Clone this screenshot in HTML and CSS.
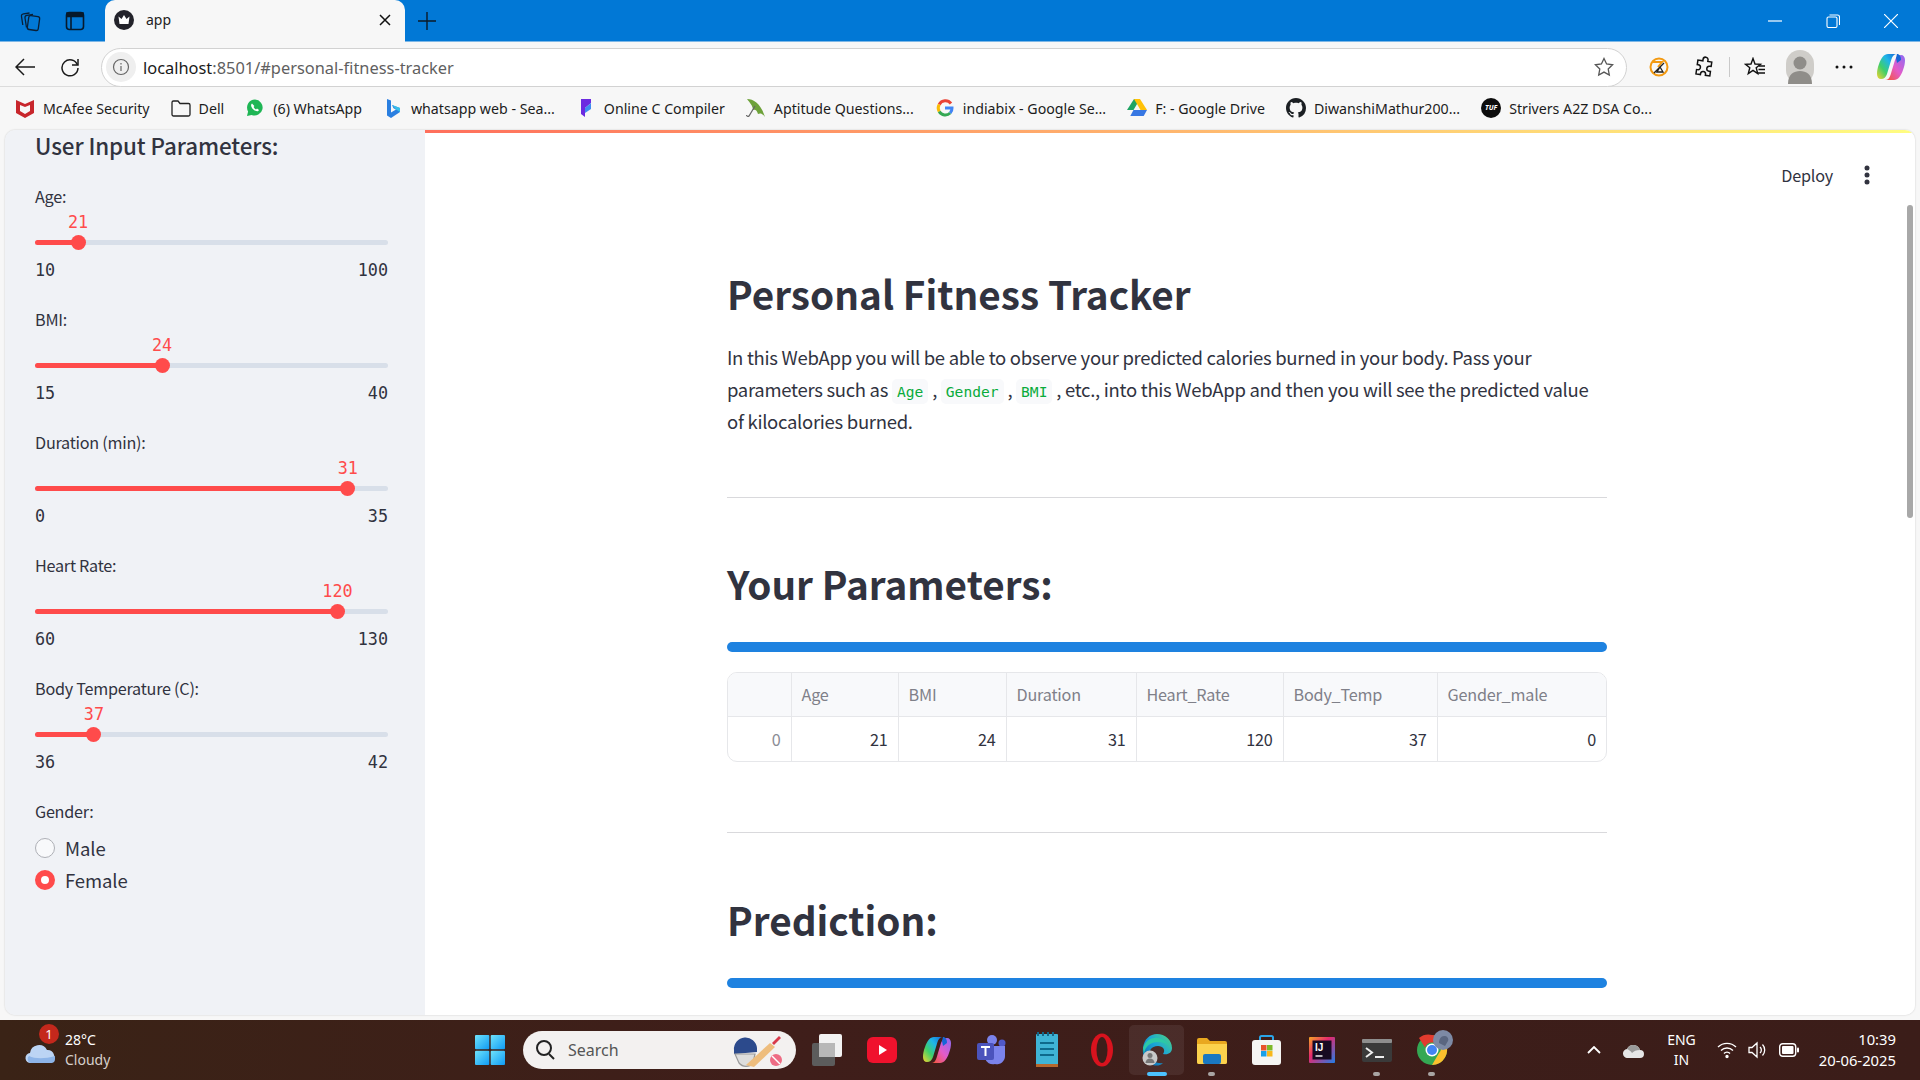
FILE: index.html
```html
<!DOCTYPE html>
<html lang="en">
<head>
	<meta charset="UTF-8">
	<title>app</title>
	<link rel="stylesheet" href="styles.css">
</head>
<body>

<svg class="defs" width="0" height="0">
	<defs>
		<linearGradient id="cop-a" x1="1" y1="0" x2="0" y2="1"><stop offset="0" stop-color="#1566d6"/><stop offset=".35" stop-color="#1fb6e8"/><stop offset=".65" stop-color="#3fcf6a"/><stop offset="1" stop-color="#f6d32d"/></linearGradient>
		<linearGradient id="cop-b" x1="1" y1="0" x2="0" y2="1"><stop offset="0" stop-color="#8a6cf5"/><stop offset=".5" stop-color="#e45bc8"/><stop offset="1" stop-color="#f5562a"/></linearGradient>
		<linearGradient id="win-g" x1="0" y1="0" x2="1" y2="1"><stop offset="0" stop-color="#6fe3fb"/><stop offset="1" stop-color="#0f9bf5"/></linearGradient>
		<linearGradient id="edge-g" x1="1" y1="0" x2="0" y2="1"><stop offset="0" stop-color="#4fd67a"/><stop offset=".45" stop-color="#1aa6d8"/><stop offset="1" stop-color="#0c5ea8"/></linearGradient>
		<linearGradient id="ij-g" x1="0" y1="0" x2="1" y2="1"><stop offset="0" stop-color="#f5a623"/><stop offset=".4" stop-color="#e6286e"/><stop offset="1" stop-color="#1f7fe8"/></linearGradient>
		<symbol id="copilot" viewBox="0 0 28 28">
			<path d="M11 1h9c-3 0-4.500 2-5.500 5L10 21c-1 3-3 5-6 5-2.500 0-4-2-4-5 0-3 .5-6 2-10C4 5 7 1 11 1z" fill="url(#cop-a)"/>
			<path d="M17 27H8c3 0 4.500-2 5.500-5L18 7c1-3 3-5 6-5 2.500 0 4 2 4 5 0 3-.5 6-2 10-2 6-5 10-9 10z" fill="url(#cop-b)"/>
			<path d="M20 1c2.500 0 4 2.500 4 6l-4 3-1-5z" fill="#1566d6"/>
		</symbol>
	</defs>
</svg>

<div class="browser">

	<div class="tabstrip">
		<div class="strip-btn">
			<svg width="22" height="22" viewBox="0 0 22 22" fill="none" stroke="#0a1f35" stroke-width="1.3"><rect x="9" y="6" width="11" height="14" rx="2" transform="rotate(8 14 13)"/><path d="M7.500 17.500 6 8c-.2-1.500.5-2.500 2-2.700L14 4.500"/><path d="M3.800 15 2.500 6.500c-.2-1.500.5-2.500 2-2.700L10.500 3"/></svg>
		</div>
		<div class="strip-btn strip-btn-b">
			<svg width="20" height="20" viewBox="0 0 20 20" fill="none" stroke="#071a2c" stroke-width="1.6"><rect x="1.500" y="1.500" width="17" height="17" rx="3"/><path d="M2 2h16v3.500H2z" fill="#071a2c"/><path d="M6 5v13"/></svg>
		</div>
		<div class="tab">
			<svg width="20" height="20" viewBox="0 0 20 20"><circle cx="10" cy="10" r="10" fill="#23232b"/><path d="M4.500 6.500 7.500 9 10 5l2.500 4 3-2.500-1 7.500h-9z" fill="#fff"/></svg>
			<span class="tab-title">app</span>
			<svg class="tab-close" width="12" height="12" viewBox="0 0 12 12" stroke="#111" stroke-width="1.5"><path d="M1 1l10 10M11 1 1 11"/></svg>
		</div>
		<svg class="tab-new" width="18" height="18" viewBox="0 0 18 18" stroke="#0b1a28" stroke-width="1.4"><path d="M9 0v18M0 9h18"/></svg>
		<div class="win-btns">
			<svg width="14" height="14" viewBox="0 0 14 14" stroke="#fff" stroke-width="1.2"><path d="M0 7h14"/></svg>
			<svg width="14" height="14" viewBox="0 0 14 14" fill="none" stroke="#fff" stroke-width="1.1"><rect x="1" y="3" width="10" height="10.500" rx="1.500"/><path d="M3.500 1h8a2 2 0 0 1 2 2v8"/></svg>
			<svg width="14" height="14" viewBox="0 0 14 14" stroke="#fff" stroke-width="1.2"><path d="M0 0l14 14M14 0 0 14"/></svg>
		</div>
	</div>

	<div class="toolbar">
		<svg class="tool-back" width="20" height="18" viewBox="0 0 20 18" fill="none" stroke="#1a1a1a" stroke-width="1.5"><path d="M20 9H1M9 1 1 9l8 8"/></svg>
		<svg class="tool-reload" width="20" height="20" viewBox="0 0 20 20" fill="none" stroke="#1a1a1a" stroke-width="1.5"><path d="M17.500 8A8 8 0 1 0 18 11"/><path d="M18 2v6h-6"/></svg>
		<div class="address">
			<span class="addr-info">
				<svg width="18" height="18" viewBox="0 0 18 18" fill="none" stroke="#666" stroke-width="1.2"><circle cx="9" cy="9" r="7.500"/><path d="M9 8v5M9 5v1.500"/></svg>
			</span>
			<span class="addr-text">localhost<span class="addr-dim">:8501/#personal-fitness-tracker</span></span>
			<svg class="addr-star" width="20" height="20" viewBox="0 0 20 20" fill="none" stroke="#555" stroke-width="1.3"><path d="m10 1.500 2.600 5.500 6 .8-4.400 4.200 1.100 6L10 15.100 4.700 18l1.100-6L1.400 7.800l6-.8z"/></svg>
		</div>
		<div class="tool-icons">
			<svg class="ti" width="20" height="20" viewBox="0 0 20 20" fill="none"><circle cx="10" cy="10" r="8.500" stroke="#f39a12" stroke-width="2"/><path d="M4 5h9l-4 5" stroke="#f39a12" stroke-width="2"/><path d="M5 16 15 6M8 15h6l-3-5z" stroke="#222" stroke-width="1.300"/></svg>
			<svg class="ti" width="20" height="22" viewBox="0 0 20 22" fill="none" stroke="#111" stroke-width="1.500"><path d="M8 3.500a2.500 2.500 0 0 1 5 0V5h4v4.500h-1.500a2.500 2.500 0 0 0 0 5H17V19h-4.500v-1a2.500 2.500 0 0 0-5 0v1H3v-4.500h1a2.500 2.500 0 0 0 0-5H3V5h5z" transform="rotate(8 10 11)"/></svg>
			<span class="tool-sep"></span>
			<svg class="ti" width="22" height="20" viewBox="0 0 22 20" fill="none" stroke="#111" stroke-width="1.400"><path d="M9 1.500 11 7l5.500.3-4.300 3.500 1.500 5.700L9 13.300l-4.700 3.200 1.500-5.700L1.500 7.300 7 7z"/><path d="M15 9h6M14.500 12.500H21M14 16h7"/></svg>
			<svg class="ti" width="28" height="34" viewBox="0 0 28 34"><rect width="28" height="34" rx="14" fill="#cfcdc9"/><circle cx="14" cy="13" r="6.500" fill="#8f8d89"/><path d="M2 34c0-10 6-13 12-13s12 3 12 13z" fill="#8f8d89"/></svg>
			<svg class="ti" width="18" height="4" viewBox="0 0 18 4" fill="#111"><circle cx="2" cy="2" r="1.500"/><circle cx="9" cy="2" r="1.500"/><circle cx="16" cy="2" r="1.500"/></svg>
			<svg class="ti" width="28" height="28"><use href="#copilot"/></svg>
		</div>
	</div>

	<div class="bookmarks">
		<a class="bm"><svg height="20" viewBox="0 0 18 20"><path d="M0 2 9 6l9-4v13l-9 5-9-5zM4 7v6l5 3 5-3V7l-5 2z" fill="#c8262c" fill-rule="evenodd"/></svg><span>McAfee Security</span></a>
		<a class="bm"><svg height="18" viewBox="0 0 20 18" fill="none" stroke="#222" stroke-width="1.300"><path d="M1 3.500A1.500 1.500 0 0 1 2.500 2H7l2 2.500h8.500A1.500 1.500 0 0 1 19 6v9.500a1.500 1.500 0 0 1-1.500 1.500h-15A1.500 1.500 0 0 1 1 15.500z"/></svg><span>Dell</span></a>
		<a class="bm"><svg height="20" viewBox="0 0 18 20"><path d="M9 1.500a8 8 0 0 0-6.900 12L1 18l4.600-1.100A8 8 0 1 0 9 1.500z" fill="#1fb655"/><path d="M6 5.500c-1 .8-1.200 2-.5 3.500 1 2 2.500 3.400 4.500 4.100 1.300.4 2.500 0 3-1.100l-2-1.400-1 .8c-1-.5-1.900-1.400-2.400-2.400l.8-1z" fill="#fff"/></svg><span>(6) WhatsApp</span></a>
		<a class="bm"><svg height="20" viewBox="0 0 16 20"><path d="M2 1l4 1.500v12l5-3-2.500-1.200L7 7l8 3v4l-9 6-4-2.500z" fill="#2a7fe0"/><path d="M7 7l8 3v4l-4-2.500z" fill="#37c0e8"/></svg><span>whatsapp web - Sea...</span></a>
		<a class="bm"><svg height="20" viewBox="0 0 12 20"><path d="M1 1h10v4L5 10V19L1 16z" fill="#6c2be0"/><path d="M5 10l6-5v6l-6 4z" fill="#3f8cf0"/></svg><span>Online C Compiler</span></a>
		<a class="bm"><svg height="22" viewBox="0 0 20 22"><path d="M1 2c7 0 14 5 18 18-3-4-5-4-7-3-1-4-3-5-5-4 0-4-3-7-6-11z" fill="#6ea23a"/><path d="M9 9 3 19a1.500 1.500 0 0 1-2.500-1" fill="none" stroke="#666" stroke-width="1.200"/></svg><span>Aptitude Questions...</span></a>
		<a class="bm"><svg height="18" viewBox="0 0 18 18" fill="none" stroke-width="3"><path d="M15 4.500A7 7 0 0 0 3.200 5.500" stroke="#ea4335"/><path d="M3.200 5.500a7 7 0 0 0 0 7" stroke="#fbbc05"/><path d="M3.200 12.500a7 7 0 0 0 11 1.500" stroke="#34a853"/><path d="M14.200 14A7 7 0 0 0 16 9H9" stroke="#4285f4"/></svg><span>indiabix - Google Se...</span></a>
		<a class="bm"><svg height="18" viewBox="0 0 20 18"><path d="M7 0h6l-6.500 11H0z" fill="#1fa463"/><path d="M7 0h6l7 11h-6.500z" fill="#ffc107"/><path d="M3.300 17 6.500 11H20l-3.300 6z" fill="#3777e3"/></svg><span>F: - Google Drive</span></a>
		<a class="bm"><svg height="20" viewBox="0 0 16 16"><path fill="#1b1f23" d="M8 0C3.580 0 0 3.580 0 8c0 3.540 2.290 6.530 5.470 7.590.4.070.55-.17.55-.38 0-.19-.01-.82-.01-1.490-2.010.37-2.530-.49-2.690-.94-.09-.23-.48-.94-.82-1.130-.28-.15-.68-.52-.01-.53.630-.01 1.080.58 1.230.82.720 1.210 1.870.870 2.330.660.070-.520.280-.870.510-1.070-1.780-.200-3.640-.890-3.640-3.950 0-.870.310-1.590.820-2.150-.080-.200-.360-1.020.080-2.120 0 0 .670-.210 2.200.820.640-.180 1.320-.270 2-.270s1.360.090 2 .270c1.530-1.040 2.200-.820 2.200-.820.440 1.100.160 1.920.080 2.120.510.560.820 1.270.820 2.150 0 3.070-1.870 3.750-3.650 3.950.290.250.540.730.540 1.480 0 1.070-.010 1.930-.010 2.200 0 .210.150.460.550.380A8.010 8.010 0 0 0 16 8c0-4.420-3.580-8-8-8z"/></svg><span>DiwanshiMathur200...</span></a>
		<a class="bm"><span class="tuf-logo">TUF</span><span>Strivers A2Z DSA Co...</span></a>
	</div>

	<div class="viewport">
		<aside class="sidebar">
			<h2 class="side-title">User Input Parameters:</h2>

			<div class="slider">
				<label class="field-label">Age:</label>
				<div class="track"><div class="fill" style="width:12.2%"><span class="thumb"><span class="thumb-val">21</span></span></div></div>
				<div class="ticks"><span>10</span><span>100</span></div>
			</div>
			<div class="slider">
				<label class="field-label">BMI:</label>
				<div class="track"><div class="fill" style="width:36%"><span class="thumb"><span class="thumb-val">24</span></span></div></div>
				<div class="ticks"><span>15</span><span>40</span></div>
			</div>
			<div class="slider">
				<label class="field-label">Duration (min):</label>
				<div class="track"><div class="fill" style="width:88.6%"><span class="thumb"><span class="thumb-val">31</span></span></div></div>
				<div class="ticks"><span>0</span><span>35</span></div>
			</div>
			<div class="slider">
				<label class="field-label">Heart Rate:</label>
				<div class="track"><div class="fill" style="width:85.7%"><span class="thumb"><span class="thumb-val">120</span></span></div></div>
				<div class="ticks"><span>60</span><span>130</span></div>
			</div>
			<div class="slider">
				<label class="field-label">Body Temperature (C):</label>
				<div class="track"><div class="fill" style="width:16.7%"><span class="thumb"><span class="thumb-val">37</span></span></div></div>
				<div class="ticks"><span>36</span><span>42</span></div>
			</div>

			<label class="field-label">Gender:</label>
			<div class="radios">
				<div class="radio"><span class="dot"></span>Male</div>
				<div class="radio on"><span class="dot"></span>Female</div>
			</div>
		</aside>

		<main class="main">
			<div class="stripe"></div>
			<div class="main-head">
				<span class="deploy">Deploy</span>
				<svg width="6" height="20" viewBox="0 0 6 20" fill="#31333f"><circle cx="3" cy="3" r="2.500"/><circle cx="3" cy="10" r="2.500"/><circle cx="3" cy="17" r="2.500"/></svg>
			</div>
			<div class="content">
				<h1 class="title">Personal Fitness Tracker</h1>
				<p class="intro">In this WebApp you will be able to observe your predicted calories burned in your body. Pass your parameters such as <code>Age</code> , <code>Gender</code> , <code>BMI</code> , etc., into this WebApp and then you will see the predicted value of kilocalories burned.</p>
				<hr class="rule rule-a">
				<h2 class="section">Your Parameters:</h2>
				<div class="bar"></div>
				<div class="table-wrap">
					<table class="data">
						<colgroup><col class="c0"><col class="c1"><col class="c2"><col class="c3"><col class="c4"><col class="c5"><col class="c6"></colgroup>
						<thead>
							<tr><th></th><th>Age</th><th>BMI</th><th>Duration</th><th>Heart_Rate</th><th>Body_Temp</th><th>Gender_male</th></tr>
						</thead>
						<tbody>
							<tr><td class="idx">0</td><td>21</td><td>24</td><td>31</td><td>120</td><td>37</td><td>0</td></tr>
						</tbody>
					</table>
				</div>
				<hr class="rule rule-b">
				<h2 class="section section-b">Prediction:</h2>
				<div class="bar"></div>
			</div>
			<div class="scroll-thumb"></div>
		</main>
	</div>
</div>

<footer class="taskbar">
	<div class="weather">
		<span class="weather-icon">
			<svg width="32" height="22" viewBox="0 0 32 22"><path d="M6 21a5 5 0 0 1-1-10 9 9 0 0 1 17-3 7 7 0 0 1 4 13z" fill="#bcd4f4"/><path d="M6 21a4 4 0 0 1-2-7c6 3 16 3 26 0v3a4 4 0 0 1-4 4z" fill="#8db4e8"/></svg>
			<span class="badge">1</span>
		</span>
		<div class="weather-text"><span>28°C</span><span class="weather-sub">Cloudy</span></div>
	</div>

	<svg class="win-logo" width="30" height="30" viewBox="0 0 30 30" fill="url(#win-g)"><rect width="14.300" height="14.300" rx="1"/><rect x="15.700" width="14.300" height="14.300" rx="1"/><rect y="15.700" width="14.300" height="14.300" rx="1"/><rect x="15.700" y="15.700" width="14.300" height="14.300" rx="1"/></svg>

	<div class="search">
		<svg width="20" height="22" viewBox="0 0 20 22" fill="none" stroke="#222" stroke-width="2"><circle cx="9" cy="9" r="7"/><path d="m14 15 5 5"/></svg>
		<span class="search-label">Search</span>
		<svg class="search-art" width="52" height="36" viewBox="0 0 52 36"><path d="M2 18a11.500 11.500 0 0 1 23-2v4L2 22z" fill="#2c4a8c"/><path d="M3 22h20l-2 9a9 9 0 0 1-14 0z" fill="#ddd" stroke="#999" stroke-width="1.200"/><path d="M14 33 38 11l5 4-21 20z" fill="#eebd7d"/><path d="m40 11 7-7 2 2-7 7z" fill="#d8394a"/><circle cx="44" cy="28" r="6" fill="#ee6c84"/><path d="m40 24 8 8" stroke="#fff" stroke-width="1.500"/></svg>
	</div>

	<div class="apps">
		<div class="app"><svg width="30" height="32" viewBox="0 0 30 32"><rect y="9" width="23" height="23" rx="2" fill="#5c5c5c"/><rect x="7" width="23" height="23" rx="2" fill="#f2f2f2"/><rect x="7" y="9" width="16" height="14" fill="#b8b8b8"/></svg></div>
		<div class="app"><svg width="30" height="26" viewBox="0 0 30 26"><rect width="30" height="26" rx="6" fill="#f0122d"/><path d="m12 8 8 5-8 5z" fill="#fff"/></svg></div>
		<div class="app"><svg width="28" height="28"><use href="#copilot"/></svg></div>
		<div class="app"><svg width="30" height="32" viewBox="0 0 30 32"><circle cx="15" cy="6" r="5" fill="#7b83eb"/><circle cx="25" cy="9" r="3.500" fill="#5059c9"/><path d="M8 12h20v10a8 8 0 0 1-10 8 8 8 0 0 1-10-6z" fill="#7b83eb"/><rect y="9" width="17" height="17" rx="2" fill="#4b53bc"/><path d="M4 13h9M8.500 13v9" stroke="#fff" stroke-width="2"/></svg></div>
		<div class="app"><svg width="22" height="36" viewBox="0 0 22 36"><rect y="2" width="22" height="32" rx="1" fill="#3fb4d6"/><rect y="32" width="22" height="3" fill="#b5682e"/><path d="M2 0v4M7 0v4M12 0v4M17 0v4" stroke="#13688a" stroke-width="2"/><path d="M4 11h14M4 17h14M4 23h14" stroke="#0e6a8c" stroke-width="2"/></svg></div>
		<div class="app"><svg width="22" height="34" viewBox="0 0 22 34"><ellipse cx="11" cy="17" rx="11" ry="16.500" fill="#d9131e"/><ellipse cx="11" cy="17" rx="5.500" ry="13" fill="#3d1e1a"/></svg></div>
		<div class="app app-active">
			<svg width="30" height="32" viewBox="0 0 30 32"><path d="M1 14C2 5 8 0 15 0c8 0 15 6 15 14 0 5-4 7-9 6 3-4 0-8-5-8C9 12 6 17 9 23c2 4 6 7 12 6-3 3-7 3-10 2C4 29 0 23 1 14z" fill="url(#edge-g)"/><path d="M1 14C3 7 9 3 16 4c6 1 9 4 11 8-3-3-7-4-11-4C9 8 3 12 2 20z" fill="#2cc9a6"/><circle cx="8" cy="24" r="7.500" fill="#c9c9c9"/><circle cx="8" cy="21.500" r="2.500" fill="#777"/><path d="M3.500 29a4.500 4.500 0 0 1 9 0z" fill="#777"/></svg>
			<span class="run run-blue"></span>
		</div>
		<div class="app">
			<svg width="30" height="27" viewBox="0 0 30 27"><path d="M0 3a2 2 0 0 1 2-2h8l3 3h15a2 2 0 0 1 2 2v19a2 2 0 0 1-2 2H2a2 2 0 0 1-2-2z" fill="#e9a81f"/><path d="M0 7h30v18a2 2 0 0 1-2 2H2a2 2 0 0 1-2-2z" fill="#fcd24d"/><rect x="6" y="17" width="18" height="10" rx="2" fill="#1a78c2"/></svg>
			<span class="run"></span>
		</div>
		<div class="app"><svg width="29" height="30" viewBox="0 0 29 30"><path d="M8 7V2.500A1.500 1.500 0 0 1 9.500 1h10A1.500 1.500 0 0 1 21 2.500V7" fill="none" stroke="#2aa5e8" stroke-width="2"/><rect y="5" width="29" height="25" rx="3" fill="#f5f5f3"/><rect x="9" y="10" width="5.500" height="5.500" fill="#e8532b"/><rect x="15" y="10" width="5.500" height="5.500" fill="#7db928"/><rect x="9" y="16" width="5.500" height="5.500" fill="#18a0e8"/><rect x="15" y="16" width="5.500" height="5.500" fill="#f8b81c"/></svg></div>
		<div class="app"><svg width="26" height="26" viewBox="0 0 26 26"><rect width="26" height="26" rx="1" fill="url(#ij-g)"/><rect x="3.500" y="3.500" width="19" height="19" fill="#170a22"/><text x="6" y="13.500" class="ij-text">IJ</text><path d="M6.500 19h7" stroke="#fff" stroke-width="1.400"/></svg></div>
		<div class="app">
			<svg width="30" height="23" viewBox="0 0 30 23"><rect width="30" height="23" rx="2" fill="#3a3a3a"/><rect width="30" height="4" rx="1" fill="#8e8e8e"/><path d="m4 9 6 4.500L4 18" fill="none" stroke="#eee" stroke-width="2"/><path d="M13 18h9" stroke="#eee" stroke-width="2"/></svg>
			<span class="run"></span>
		</div>
		<div class="app">
			<svg width="42" height="44" viewBox="0 0 42 44"><circle cx="21" cy="22" r="15" fill="#34a853"/><path d="M21 7a15 15 0 0 1 13 7.500H21a7.500 7.500 0 0 0-7 5L8 10A15 15 0 0 1 21 7z" fill="#e33b2e"/><path d="M34 14.500A15 15 0 0 1 21 37l7-12a7.500 7.500 0 0 0 0-10.500z" fill="#fbc02d"/><circle cx="21" cy="22" r="6.500" fill="#fff"/><circle cx="21" cy="22" r="5" fill="#4285f4"/><circle cx="32" cy="12" r="10" fill="#7d8aa5"/><path d="M28 15c0-4 2-7 5-7s5 2 4 5l-3 5z" fill="#5a6680"/></svg>
			<span class="run"></span>
		</div>
	</div>

	<div class="tray">
		<svg class="tray-chev" width="14" height="8" viewBox="0 0 14 8" fill="none" stroke="#fff" stroke-width="1.800"><path d="m1 7 6-6 6 6"/></svg>
		<svg class="tray-cloud" width="22" height="16" viewBox="0 0 22 16"><path d="M5 16a4.500 4.500 0 0 1-1-9 7 7 0 0 1 13 1 4 4 0 0 1 0 8z" fill="#e6e6e6"/><path d="M4 7a7 7 0 0 1 13 1c-4 0-6 1-8 3-1-2-3-3-5-4z" fill="#9a9a9a"/></svg>
		<div class="tray-lang"><span>ENG</span><span>IN</span></div>
		<div class="tray-icons">
			<svg width="20" height="18" viewBox="0 0 20 18" fill="none" stroke="#fff" stroke-width="1.400"><path d="M1 6a13 13 0 0 1 18 0M4 9.500a8.500 8.500 0 0 1 12 0M7 12.500a4 4 0 0 1 6 0"/><circle cx="10" cy="15.500" r="1" fill="#fff"/></svg>
			<svg width="20" height="18" viewBox="0 0 20 18" fill="none" stroke="#fff" stroke-width="1.300"><path d="M1 6.500h3L9 2v14l-5-4.500H1zM12 6a4 4 0 0 1 0 6M14.500 3.500a8 8 0 0 1 0 11"/></svg>
			<svg width="20" height="14" viewBox="0 0 20 14"><rect x=".7" y=".7" width="16" height="12.600" rx="3" fill="none" stroke="#fff" stroke-width="1.400"/><rect x="3" y="3" width="11.500" height="8" rx="1" fill="#fff"/><rect x="18" y="4.500" width="2" height="5" rx="1" fill="#fff"/></svg>
		</div>
		<div class="tray-clock"><span>10:39</span><span>20-06-2025</span></div>
	</div>
</footer>

</body>
</html>
```
FILE: styles.css
```css
html, body {
	width: 1920px;
	height: 1080px;
	margin: 0;
	overflow: hidden;
	font-family: "Noto Sans CJK SC", "Noto Sans", sans-serif;
	color: #31333f;
}

.defs {
	position: absolute;
}

svg {
	flex: none;
	display: block;
}

/* browser chrome */

.browser {
	height: 1020px;
	background: #f7f7f7;
	display: flex;
	flex-direction: column;
}

.tabstrip {
	height: 42px;
	background: #0178d6;
	display: flex;
	align-items: center;
	box-shadow: inset 0 -1px 0 #7db7e6;
}

.strip-btn {
	width: 22px;
	margin-left: 19px;
	display: flex;
	justify-content: center;
}

.strip-btn-b {
	margin-left: 23px;
}

.tab {
	width: 300px;
	height: 42px;
	margin-left: 19px;
	box-sizing: border-box;
	padding: 0 14px 2px 9px;
	background: #f7f7f7;
	border-radius: 10px 10px 0 0;
	display: flex;
	align-items: center;
	font-family: "Noto Sans", sans-serif;
	font-size: 14px;
	color: #222;
}

.tab-title {
	margin-left: 12px;
	padding-bottom: 2px;
}

.tab-close {
	margin-left: auto;
}

.tab-new {
	margin-left: 13px;
}

.win-btns {
	margin-left: auto;
	margin-right: 22px;
	display: flex;
	gap: 44px;
}

.toolbar {
	height: 45px;
	display: flex;
	align-items: center;
	padding-top: 6px;
	box-sizing: border-box;
	border-bottom: 1px solid #dcdcdc;
}

.tool-back {
	margin-left: 15px;
}

.tool-reload {
	margin-left: 25px;
}

.address {
	width: 1526px;
	height: 39px;
	margin-left: 21px;
	box-sizing: border-box;
	background: #fff;
	border: 1.5px solid #d2d2d2;
	border-radius: 20px;
	display: flex;
	align-items: center;
	padding: 0 12px 0 4px;
}

.addr-info {
	width: 30px;
	height: 30px;
	border-radius: 15px;
	background: #efefef;
	display: flex;
	align-items: center;
	justify-content: center;
}

.addr-text {
	margin-left: 7px;
	font-family: "Noto Sans", sans-serif;
	font-size: 16.4px;
	color: #1a1a1a;
}

.addr-dim {
	color: #5f5f5f;
}

.addr-star {
	margin-left: auto;
}

.tool-icons {
	display: flex;
	align-items: center;
	margin-left: 22px;
}

.ti:nth-child(2) {
	margin-left: 25px;
}

.tool-sep {
	width: 1px;
	height: 20px;
	background: #c9c9c9;
	margin: 0 14px 0 15px;
}

.ti:nth-child(5) {
	margin-left: 20px;
}

.ti:nth-child(6) {
	margin-left: 21px;
}

.ti:nth-child(7) {
	margin-left: 24px;
}

.bookmarks {
	height: 43px;
	padding: 0 0 1px 15px;
	box-sizing: border-box;
	display: flex;
	align-items: center;
	gap: 21px;
	font-family: "Noto Sans", sans-serif;
	font-size: 14.2px;
	color: #1c1c1c;
}

.bm {
	display: flex;
	align-items: center;
	gap: 8px;
	white-space: nowrap;
}

.bm svg {
	width: 20px;
}

.tuf-logo {
	width: 20px;
	height: 20px;
	border-radius: 10px;
	background: #0c0c0c;
	color: #fff;
	font-size: 7px;
	font-weight: 700;
	font-style: italic;
	line-height: 20px;
	text-align: center;
}

/* page area */

.viewport {
	height: 885px;
	margin: 0 5px;
	display: flex;
	border-radius: 10px;
	overflow: hidden;
	box-shadow: 0 0 2px rgba(0,0,0,.2);
}

.sidebar {
	width: 420px;
	box-sizing: border-box;
	padding: 0 37px 0 30px;
	background: #f0f2f6;
}

.side-title {
	margin: -2px 0 22px;
	font-size: 22.4px;
	line-height: 34px;
	font-weight: 500;
	letter-spacing: -.1px;
}

.slider {
	height: 123px;
}

.field-label {
	display: block;
	font-size: 16.2px;
	letter-spacing: -.25px;
	line-height: 24px;
}

.track {
	height: 5px;
	margin-top: 32px;
	border-radius: 3px;
	background: #d8dfe9;
}

.fill {
	height: 100%;
	border-radius: 3px;
	background: #ff4b4b;
	position: relative;
}

.thumb {
	position: absolute;
	right: -7.5px;
	top: -5px;
	width: 15px;
	height: 15px;
	border-radius: 50%;
	background: #ff4b4b;
}

.thumb-val {
	position: absolute;
	left: 50%;
	bottom: 17px;
	transform: translateX(-50%);
	font-family: "DejaVu Sans Mono", monospace;
	font-size: 16.8px;
	line-height: 22px;
	color: #ff4b4b;
}

.ticks {
	margin-top: 13px;
	display: flex;
	justify-content: space-between;
	font-family: "DejaVu Sans Mono", monospace;
	font-size: 16.8px;
	line-height: 24px;
}

.radios {
	margin-top: 13px;
	display: flex;
	flex-direction: column;
	gap: 8px;
}

.radio {
	display: flex;
	align-items: center;
	gap: 10px;
	font-size: 18.5px;
	letter-spacing: -.1px;
	line-height: 24px;
}

.dot {
	width: 20px;
	height: 20px;
	box-sizing: border-box;
	border-radius: 50%;
	background: #f8f9fb;
	border: 1px solid #aeb0b6;
}

.radio.on .dot {
	background: #fff;
	border: 6px solid #ff4b4b;
}

.main {
	flex: 1;
	background: #fff;
	position: relative;
}

.stripe {
	height: 3px;
	background: linear-gradient(to right, #ff6f5c, #fffd80);
}

.main-head {
	height: 84px;
	padding-right: 45px;
	display: flex;
	justify-content: flex-end;
	align-items: center;
	gap: 31px;
}

.deploy {
	font-size: 16.2px;
	letter-spacing: -.2px;
}

.content {
	width: 880px;
	margin-left: 302px;
}

.title {
	margin: 46px 0 0;
	font-size: 38.7px;
	line-height: 60px;
	font-weight: 600;
}

.intro {
	margin: 18px 0 0;
	font-size: 18.5px;
	letter-spacing: -.3px;
	line-height: 32px;
}

code {
	font-family: "DejaVu Sans Mono", monospace;
	font-size: 14.6px;
	letter-spacing: 0;
	line-height: 1;
	color: #09ab3b;
	background: #f8f9fb;
	padding: 4px 5px;
	border-radius: 5px;
}

.rule {
	height: 1px;
	border: 0;
	margin: 0;
	background: #d9d9dc;
}

.rule-a {
	margin-top: 60px;
}

.section {
	margin: 55px 0 0;
	font-size: 38.7px;
	line-height: 60px;
	font-weight: 600;
}

.section-b {
	margin-top: 56px;
}

.bar {
	height: 10px;
	margin-top: 29px;
	border-radius: 5px;
	background: #1e82e0;
}

.table-wrap {
	margin-top: 20px;
	border: 1px solid #e6e7ea;
	border-radius: 10px;
	overflow: hidden;
}

.data {
	width: 100%;
	border-collapse: collapse;
	table-layout: fixed;
	font-size: 16.2px;
	letter-spacing: -.2px;
}

.c0 { width: 63px; }
.c1 { width: 107px; }
.c2 { width: 108px; }
.c3 { width: 130px; }
.c4 { width: 147px; }
.c5 { width: 154px; }

.data th, .data td {
	border-left: 1px solid #e6e7ea;
	padding: 0 10px;
	font-weight: 400;
}

.data th:first-child, .data td:first-child {
	border-left: 0;
}

.data th {
	height: 41px;
	padding-bottom: 2px;
	text-align: left;
	background: #f8f9fb;
	color: #7f8089;
	border-bottom: 1px solid #e6e7ea;
}

.data td {
	height: 44px;
	text-align: right;
}

.data .idx {
	color: #8b8c94;
}

.rule-b {
	margin-top: 70px;
}

.scroll-thumb {
	position: absolute;
	right: 2px;
	top: 75px;
	width: 6px;
	height: 313px;
	border-radius: 3px;
	background: #a8a8a8;
}

/* taskbar */

.taskbar {
	height: 60px;
	background: linear-gradient(to right, #3a2316, #3f1e1a 40%, #3b1d19);
	display: flex;
	align-items: center;
	color: #fff;
	font-family: "Noto Sans", sans-serif;
	font-size: 14px;
}

.weather {
	width: 475px;
	flex: none;
	padding-left: 25px;
	box-sizing: border-box;
	display: flex;
	align-items: center;
	gap: 8px;
}

.weather-icon {
	position: relative;
	width: 32px;
	height: 22px;
	margin-top: 6px;
}

.badge {
	position: absolute;
	left: 14px;
	top: -18px;
	width: 20px;
	height: 20px;
	border-radius: 50%;
	background: #c4281c;
	font-size: 13px;
	line-height: 20px;
	text-align: center;
}

.weather-text {
	display: flex;
	flex-direction: column;
	line-height: 20px;
}

.weather-sub {
	color: #d6cfcb;
}

.search {
	width: 273px;
	height: 38px;
	margin-left: 18px;
	box-sizing: border-box;
	padding: 0 12px;
	border-radius: 19px;
	background: #f3f1f0;
	display: flex;
	align-items: center;
	color: #555;
	font-size: 16px;
	flex: none;
}

.search-label {
	margin-left: 13px;
}

.search-art {
	margin-left: auto;
}

.apps {
	display: flex;
	margin-left: 3px;
}

.app {
	width: 55px;
	height: 50px;
	display: flex;
	align-items: center;
	justify-content: center;
	position: relative;
}

.app-active {
	background: rgba(255,255,255,.07);
	border-radius: 5px;
}

.run {
	position: absolute;
	left: 50%;
	bottom: -1px;
	width: 7px;
	height: 4px;
	margin-left: -3.5px;
	border-radius: 2px;
	background: #a9a5a3;
}

.run-blue {
	width: 20px;
	margin-left: -10px;
	background: #4cc2ff;
}

.ij-text {
	fill: #fff;
	font-family: "Liberation Sans", sans-serif;
	font-size: 10px;
	font-weight: 700;
}

.tray {
	margin-left: auto;
	padding-right: 24px;
	display: flex;
	align-items: center;
}

.tray-cloud {
	margin-left: 22px;
}

.tray-lang {
	margin-left: 22px;
	display: flex;
	flex-direction: column;
	align-items: center;
	line-height: 20px;
}

.tray-icons {
	margin-left: 21px;
	display: flex;
	align-items: center;
	gap: 11px;
}

.tray-clock {
	margin-left: 20px;
	font-size: 14.8px;
	display: flex;
	flex-direction: column;
	align-items: flex-end;
	line-height: 21px;
}
```
